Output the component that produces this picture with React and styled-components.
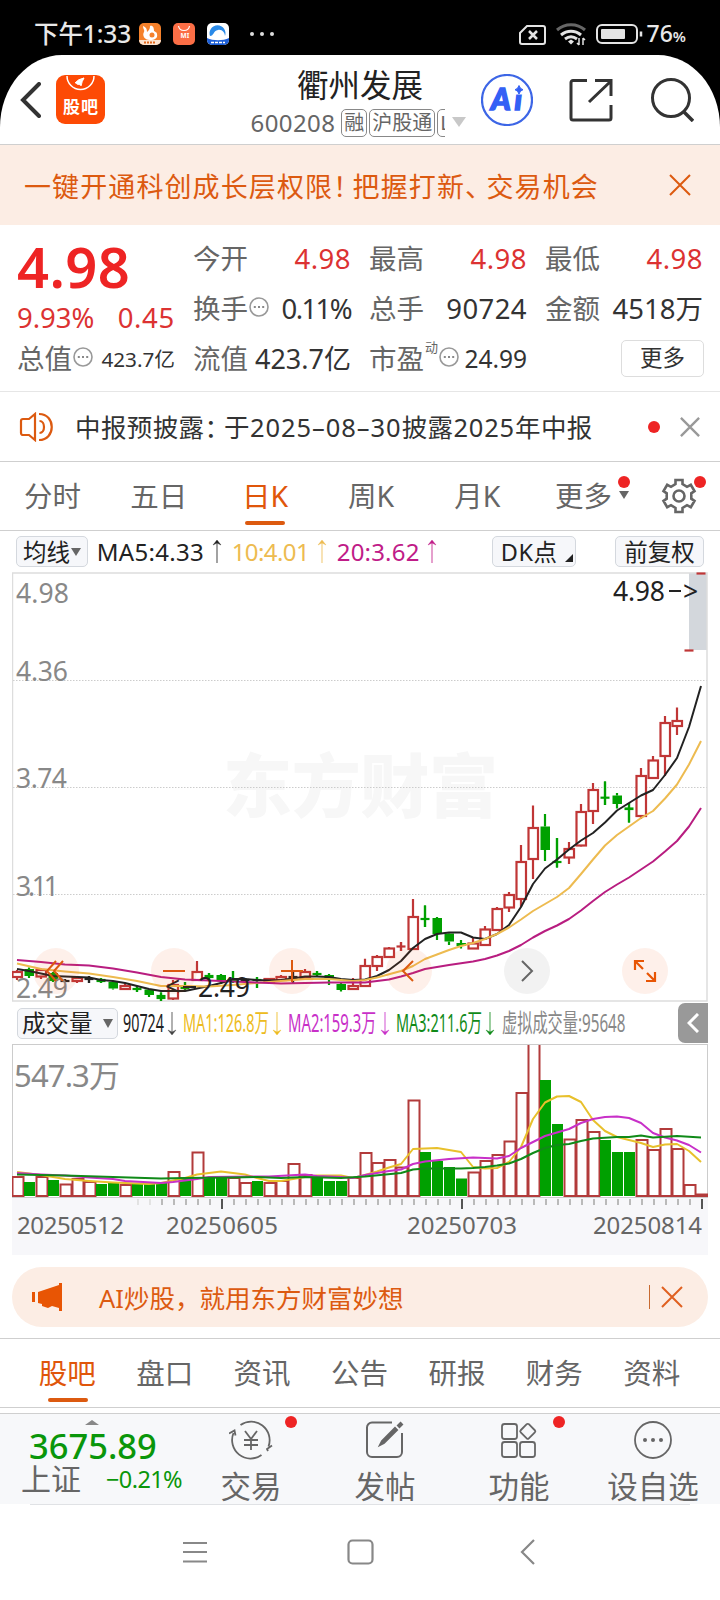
import React from 'react';
import styled, { createGlobalStyle } from 'styled-components'

const GlobalStyle = createGlobalStyle`
  * { box-sizing: border-box; }
  body {
    margin: 0;
    background: #000;
    font-family: 'Noto Sans', 'Noto Sans CJK SC', sans-serif;
    color: #222;
  }
  svg { display: block; flex: none; }
`

const Phone = styled.div`
  width: 720px;
  height: 1600px;
  overflow: hidden;
  background: #000;
`

const StatusBar = styled.div`
  height: 55px;
  padding: 12px 34px 0 34px;
  display: flex;
  align-items: center;
  justify-content: space-between;
  color: #e8e8e8;
`

const StatusGroup = styled.div`
  display: flex;
  align-items: center;
  gap: ${p => p.$gap}px;
`

const Clock = styled.span`
  font-size: 24.5px;
  line-height: 30px;
  font-weight: 500;
  letter-spacing: -0.1px;
  margin-right: -4px;
`

const Percent = styled.span`
  font-size: 23px;
  font-weight: 500;
  line-height: 30px;
  padding-top: 2px;
  small { font-size: 15px; font-weight: 600; }
`

const Screen = styled.div`
  height: 1545px;
  background: #fff;
  border-radius: 62px 62px 0 0 / 72px 72px 0 0;
  overflow: hidden;
`

const Header = styled.div`
  height: 90px;
  display: grid;
  grid-template-columns: 245px 230px 245px;
  border-bottom: 1px solid #cfcfcf;
`

const HeaderLeft = styled.div`
  display: flex;
  align-items: center;
  gap: 15px;
  padding-left: 20px;
`

const HeaderTools = styled.div`
  display: flex;
  align-items: center;
  padding-left: 6px;
`

const TitleBlock = styled.div`
  display: flex;
  flex-direction: column;
  align-items: center;
`

const Title = styled.div`
  font-size: 31.5px;
  line-height: 40px;
  margin-top: 10px;
  color: #222;
`

const CodeRow = styled.div`
  display: flex;
  align-items: center;
  width: 219px;
  height: 28px;
  margin-top: 3px;
  color: #666;
  font-size: 24px;
  letter-spacing: 0.4px;
`

const TagStrip = styled.div`
  display: flex;
  gap: 2px;
  width: 104px;
  margin: 2px 7px 0 6px;
  overflow: hidden;
`

const Tag = styled.span`
  flex: none;
  height: 28px;
  line-height: 25px;
  padding: 0 2px;
  border: 1.5px solid #888;
  border-radius: 5px;
  font-size: 20px;
  letter-spacing: 0;
`

const Notice = styled.div`
  height: 80px;
  display: flex;
  align-items: center;
  justify-content: space-between;
  padding: 0 29px 0 24px;
  background: #fcede4;
  color: #dc5a10;
  font-size: 27px;
  letter-spacing: 1.1px;
`

const Spaced = styled.span`
  letter-spacing: ${p => p.$by}px;
`

const Quote = styled.div`
  height: 167px;
  display: grid;
  grid-template-columns: repeat(4, 158px);
  column-gap: 18px;
  padding: 9px 0 0 17px;
  border-bottom: 1px solid #e6e6e6;
`

const Column = styled.div`
  display: flex;
  flex-direction: column;
`

const Price = styled.div`
  height: 68px;
  line-height: 64px;
  font-size: 56px;
  font-weight: 600;
  letter-spacing: 0.4px;
  color: #ee2424;
`

const Change = styled.div`
  height: 32px;
  line-height: 31px;
  display: flex;
  justify-content: space-between;
  font-size: 27.5px;
  color: #dc3232;
`

const Cell = styled.div`
  height: 50px;
  display: flex;
  align-items: center;
`

const Label = styled.span`
  font-size: 27.5px;
  line-height: 34px;
  color: #666;
`

const Value = styled.span`
  margin-left: auto;
  font-size: ${p => p.$size || 27.5}px;
  line-height: 34px;
  letter-spacing: ${p => p.$track || 0}px;
  white-space: nowrap;
  color: ${p => (p.$up ? '#dc3232' : '#333')};
`

const Super = styled.span`
  font-size: 13px;
  line-height: 14px;
  margin-bottom: 24px;
  margin-left: 1px;
  color: #666;
`

const MoreButton = styled.div`
  width: 83px;
  height: 37px;
  margin: -1px -1px 0 auto;
  line-height: 33px;
  text-align: center;
  border: 1.5px solid #ddd;
  border-radius: 5px;
  font-size: 22.5px;
  color: #333;
`

const News = styled.div`
  height: 70px;
  display: flex;
  align-items: center;
  padding: 0 20px 0 19px;
  border-bottom: 1px solid #cfcfcf;
`

const NewsText = styled.div`
  flex: 1;
  margin-left: 21px;
  padding-bottom: 2px;
  font-size: 25.5px;
  letter-spacing: 0.4px;
  color: #333;
  white-space: nowrap;
`

const Dot = styled.i`
  display: block;
  width: 12px;
  height: 12px;
  border-radius: 50%;
  background: #ee2424;
`

const CornerDot = styled(Dot)`
  position: absolute;
  left: ${p => p.$x}px;
  top: ${p => p.$y}px;
`

const Tabs = styled.div`
  display: flex;
  height: ${p => p.$height}px;
  padding: ${p => p.$pad};
  border-top: ${p => (p.$topLine ? '1px solid #cfcfcf' : 'none')};
  border-bottom: 1px solid #cfcfcf;
`

const Tab = styled.div`
  position: relative;
  width: ${p => p.$width}px;
  display: flex;
  align-items: center;
  justify-content: center;
  padding: 0 1px 3px 0;
  font-size: 28.5px;
  color: ${p => (p.$active ? '#e0560a' : '#666')};
  &::after {
    content: '';
    display: ${p => (p.$active ? 'block' : 'none')};
    position: absolute;
    bottom: 5px;
    left: calc(50% - 20px);
    width: 40px;
    height: 4px;
    border-radius: 2px;
    background: #dc5a10;
  }
`

const MoreTab = styled(Tab)`
  justify-content: flex-start;
  padding-left: 24px;
`

const GearTab = styled(Tab)`
  padding: 0 0 0 3px;
`

const Triangle = styled.i`
  display: block;
  border: solid transparent;
  border-width: ${p => p.$h}px ${p => p.$w / 2}px 0;
  border-top-color: ${p => p.$color || '#666'};
`

const Indicators = styled.div`
  display: flex;
  align-items: center;
  height: 41px;
  padding: 0 16px;
  font-size: 24px;
`

const Chip = styled.div`
  display: flex;
  align-items: center;
  justify-content: space-between;
  width: ${p => p.$width}px;
  height: 31px;
  padding: 0 ${p => p.$pad}px;
  border: 1px solid #d4d8de;
  border-radius: 5px;
  background: #f6f7fa;
  font-size: 23.5px;
  line-height: 28px;
  white-space: nowrap;
`

const Average = styled.span`
  width: ${p => p.$width}px;
  margin-left: ${p => p.$left}px;
  letter-spacing: ${p => p.$track || 0}px;
  color: ${p => p.$color};
  white-space: nowrap;
`

const Spacer = styled.div`
  width: ${p => p.$width}px;
  flex: none;
`

const ChartBox = styled.div`
  position: relative;
  width: 696px;
  margin-left: 12px;
`

const Controls = styled.div`
  position: absolute;
  left: 21px;
  top: 376px;
  display: flex;
  gap: 71.8px;
`

const RoundButton = styled.div`
  width: 46px;
  height: 46px;
  border-radius: 50%;
  display: flex;
  align-items: center;
  justify-content: center;
  background: ${p => (p.$gray ? 'rgba(150,150,150,0.12)' : 'rgba(240,90,20,0.09)')};
`

const VolumeBar = styled.div`
  display: flex;
  align-items: center;
  height: 42px;
  padding: 0 12px 0 17px;
`

const Squeezed = styled.div`
  width: ${p => p.$width}px;
  margin-left: ${p => p.$left}px;
  font-size: 24.5px;
  line-height: 32px;
  color: ${p => p.$color};
  white-space: nowrap;
  span {
    display: inline-block;
    transform: scaleX(${p => p.$scale});
    transform-origin: left;
  }
`

const Expander = styled.div`
  width: 30px;
  height: 40px;
  margin-left: auto;
  border-radius: 7px 0 0 7px;
  background: #999;
  display: flex;
  align-items: center;
  justify-content: center;
`

const Promo = styled.div`
  height: 60px;
  margin: 12px 12px 11px;
  padding: 0 25px 0 20px;
  border-radius: 30px;
  background: #fcede4;
  display: flex;
  align-items: center;
  font-size: 25.5px;
  color: #dc5a10;
`

const PromoText = styled.div`
  flex: 1;
  margin-left: 37px;
  padding-bottom: 2px;
`

const Divider = styled.div`
  width: 1px;
  height: 24px;
  margin-right: 11px;
  background: #c86a30;
`

const BottomBar = styled.div`
  display: flex;
  height: 91px;
  margin-top: 5px;
  border-top: 1px solid #cfcfcf;
  background: #f7f8fa;
`

const IndexBlock = styled.div`
  width: 184px;
  padding: 6px 0 0 21px;
`

const IndexArrow = styled.i`
  display: block;
  width: 0;
  margin-left: 64px;
  border: solid transparent;
  border-width: 0 7px 5px;
  border-bottom-color: #888;
`

const IndexValue = styled.div`
  padding-left: 8px;
  font-size: 34.5px;
  font-weight: 500;
  line-height: 41px;
  color: #0a960a;
`

const IndexRow = styled.div`
  display: flex;
  align-items: center;
  justify-content: space-between;
  width: 161px;
  height: 26px;
  line-height: 30px;
  font-size: 30px;
  color: #666;
  em {
    font-style: normal;
    font-size: 23.5px;
    color: #0a960a;
    letter-spacing: -0.6px;
  }
`

const Action = styled.div`
  position: relative;
  width: 134px;
  display: flex;
  flex-direction: column;
  align-items: center;
  padding-top: 6px;
  font-size: 30.5px;
  line-height: 42px;
  color: #666;
  svg { margin-bottom: 5px; }
`

const NavBar = styled.div`
  height: 96px;
  margin: 0 30px;
  border-top: 1px solid #e0e2e5;
  display: flex;
  justify-content: center;
  align-items: center;
  gap: 140px;
  padding: 0 0 2px 3px;
`

const RED = '#c03636'
const GREEN = '#00a000'
const BLACK = '#222'

// [colour, high, body top, body bottom, low], one entry per trading day
const candles = [
  ['r', 970, 972, 977, 980], ['g', 967.5, 969, 976, 978], ['r', 968.5, 970, 976.5, 979],
  ['g', 972, 973, 981, 982], ['k', 979, 981, 981, 982], ['r', 977, 978, 981, 983],
  ['k', 976, 979, 979, 983], ['g', 978, 980, 981, 983], ['g', 981, 982, 988.5, 989.5],
  ['r', 983.5, 986, 989, 990], ['g', 986, 989, 989, 992], ['g', 989, 989.5, 995, 997],
  ['g', 992.5, 996, 998, 1001], ['r', 980, 985, 998.5, 1000], ['g', 982, 987, 988, 991],
  ['r', 961, 972, 980, 981], ['g', 973, 976, 977, 979], ['g', 974, 975, 980, 984],
  ['g', 971, 980, 980, 983], ['k', 978, 980, 980, 982], ['g', 977, 980, 980, 988],
  ['r', 978, 979, 982, 983], ['r', 975, 977, 980, 981], ['k', 972, 977, 977, 983],
  ['r', 969, 972, 978, 979], ['g', 971, 974, 974, 977], ['g', 974, 975, 979, 985],
  ['g', 983, 984, 990, 991.5], ['r', 978, 986, 989, 989], ['r', 958.7, 966, 986, 987],
  ['r', 955, 957, 966, 971], ['r', 947, 948.5, 957, 958], ['r', 942, 946.5, 946.5, 951],
  ['r', 899, 917, 949, 950], ['g', 905.5, 919, 919, 927], ['g', 917, 918, 934, 940],
  ['g', 933, 933.5, 941.5, 945], ['g', 940, 943, 946, 948.5], ['r', 938, 943.5, 948.5, 949],
  ['r', 926, 929.5, 945, 946], ['r', 907, 909, 930, 930], ['r', 892, 895, 907.5, 912],
  ['r', 845, 862, 899, 907], ['r', 805.5, 828, 859, 879], ['g', 814, 826.5, 850, 861],
  ['g', 838, 862, 862, 867.5], ['r', 842, 849, 857.5, 864], ['r', 804, 812, 845.5, 846.5],
  ['r', 783, 790, 811, 824], ['g', 781.5, 797.7, 797.7, 805], ['g', 793, 795.5, 804, 808.5],
  ['g', 803, 808.5, 809, 822.5], ['r', 768, 776, 816, 819], ['r', 756, 760.5, 778, 779],
  ['r', 716, 723, 756, 776], ['r', 707.5, 721, 726, 735],
  ['r', 650.5, 650.5, 650.5, 650.5], ['r', 573.5, 573.5, 573.5, 573.5],
]

const volumes = [
  1177, 1182, 1177, 1180, 1184.5, 1179, 1182, 1184, 1182.5, 1185, 1184, 1184, 1183, 1172, 1177,
  1152.5, 1177, 1177.5, 1178, 1183, 1181, 1183, 1181, 1164, 1175, 1177, 1181, 1181, 1178, 1153,
  1163, 1160, 1167.5, 1100.5, 1152, 1161, 1167, 1178.5, 1172.5, 1161, 1155, 1141.5, 1093, 1030,
  1080, 1124, 1139.5, 1120, 1132, 1140, 1152, 1152, 1140, 1150, 1129, 1149, 1185, 1194.5,
]
const fallingDays = [1, 3, 7, 8, 10, 11, 12, 14, 16, 17, 20, 25, 26, 27, 34, 35, 36, 37, 44, 45, 49, 50, 51]

const ma5 = '17,969 29,971 41,973.5 53,976 65,976.5 77,977 89,977.5 101,980 113,981 125,983 137,986 149,989 161,991 185,991 197,988.5 209,986 221,983 233,979 245,979 257,980 269,980.5 281,980 293,978.5 305,976.5 317,976.5 329,977 341,979 353,980 365,979.5 377,976 389,970 401,961 413,948 425,939 437,934 449,932.5 461,932.5 473,937.5 485,939 497,934 509,925 521,907 533,884 545,868.5 557,859.5 569,849.5 581,840.5 593,833 605,822.5 617,810.5 629,803 641,795.5 653,790 665,775 677,758 689,727 701,686'
const ma10 = '17,963.5 41,969 65,971.5 89,973.5 113,977 137,981 161,986 185,986 209,986.5 233,985 257,983 281,981 305,979 329,979 353,981 365,980 377,977.5 401,971 413,966 425,959 437,954.5 449,950 461,946 473,943 485,939 497,934 509,927.5 521,919.5 533,911 545,904 557,897 569,888 581,874 593,859.5 605,845.5 617,835 629,826.5 641,818 653,811 665,798.5 677,784.5 689,764.5 701,741'
const ma20 = '17,960 41,962 65,964.5 89,965.5 113,968.5 137,972.5 161,977 185,979.5 209,980.5 233,981.5 257,982.5 281,983.5 305,983 329,982.5 365,982.5 389,979.5 401,976.5 413,973 425,969 449,965 473,961.5 485,959 497,955.5 509,951 521,945 533,937.5 545,931 557,925.5 569,919 581,910.5 593,901 605,892 617,884.5 629,877.5 641,869.5 653,861.5 665,851.5 677,841 689,826.5 701,808'
const vol1 = '17,1172 41,1175 65,1179 89,1181 113,1182.5 149,1184 161,1183 185,1178 197,1174.5 209,1173 221,1171.5 233,1173 245,1174.5 257,1178 269,1181 281,1181 305,1177 317,1175.5 341,1175.5 353,1178 365,1175 377,1171.5 389,1167.5 401,1164 413,1149 437,1148 449,1150 461,1152 473,1167 485,1168.5 497,1168 509,1162 521,1147 533,1119 545,1102.5 557,1096.5 569,1096 581,1102 593,1120 605,1131 617,1137 629,1140 641,1143 653,1147 665,1144.5 677,1144 689,1151 701,1162'
const vol2 = '17,1173 41,1174.5 65,1175.5 89,1177.5 113,1179 125,1181 161,1183 173,1182 197,1179 209,1177 269,1176.5 305,1174.5 317,1176 341,1177 353,1178 365,1175 389,1171 401,1169.5 413,1164 425,1161.5 449,1159 473,1157.5 497,1158.5 509,1156 521,1148 533,1142 545,1136 569,1129 581,1123 593,1119 605,1117 617,1116.5 629,1118 641,1123 653,1133 665,1137.5 677,1140.5 689,1145 701,1152.5'
const vol3 = '17,1174.5 65,1175.5 113,1177 161,1178.5 185,1178 233,1177.5 257,1177 281,1178 305,1177 341,1178 365,1176.5 401,1173 413,1169.5 425,1168.5 461,1168.5 473,1168 485,1167 497,1165.5 509,1163.5 521,1159 533,1153 545,1148 557,1145 569,1144 581,1141 593,1138.5 617,1137 629,1137 641,1135.5 653,1137.5 677,1136 701,1137.5'

const dayX = i => 17 + i * 12

const Candle = ({ x, data }) => {
  const [kind, high, top, bottom, low] = data
  const color = kind === 'r' ? RED : kind === 'g' ? GREEN : BLACK
  const flat = bottom - top < 3
  return (
    <g stroke={color} strokeWidth="2.2">
      <path d={`M${x} ${high}V${top}M${x} ${bottom}V${low}`} />
      {flat
        ? <path d={`M${x - 4.5} ${(top + bottom) / 2}h9`} strokeWidth={2.2 + bottom - top} />
        : <rect x={x - 4.5} y={top} width="9.5" height={bottom - top} fill={kind === 'r' ? '#fff' : color} strokeWidth={kind === 'r' ? 2.2 : 0} />}
      {flat && <path d={`M${x} ${high}V${low}`} />}
    </g>
  )
}

const Line = ({ points, color }) => (
  <polyline points={points} fill="none" stroke={color} strokeWidth="2" strokeLinejoin="round" />
)

const PriceChart = () => (
  <svg width="696" height="430" viewBox="12 572 696 430">
    <text x="223" y="812" textLength="275" fontSize="69" fontWeight="900" fill="#f7f7f7">东方财富</text>
    {[680.5, 787.5, 894.5].map(y => (
      <path key={y} d={`M13 ${y}H707`} stroke="#ccc" strokeDasharray="1.5 1.5" />
    ))}
    <rect x="689" y="573" width="18" height="77" fill="#d3d7dc" />
    <rect x="12.5" y="573" width="694.5" height="428" fill="none" stroke="#ddd" strokeWidth="1.5" />
    {candles.map((c, i) => <Candle key={i} x={dayX(i)} data={c} />)}
    <Line points={ma5} color="#222" />
    <Line points={ma10} color="#edbb50" />
    <Line points={ma20} color="#b81d80" />
    <g fontSize="26.5" fill="#888">
      <text x="16" y="603" textLength="53">4.98</text>
      <text x="16" y="680.5" textLength="52">4.36</text>
      <text x="16" y="788" textLength="51">3.74</text>
      <text x="16" y="895.5" textLength="43">3.11</text>
      <text x="16" y="998" textLength="52">2.49</text>
    </g>
    <g fontSize="26.5" fill="#222">
      <text x="613" y="601" textLength="52">4.98</text>
      <text x="683" y="601">&gt;</text>
      <path d="M669 591h12M183 987h13" stroke="#222" strokeWidth="2.2" />
      <text x="165" y="996">&lt;</text>
      <text x="198" y="997" textLength="52">2.49</text>
    </g>
  </svg>
)

const VolumeChart = () => (
  <svg width="696" height="211" viewBox="12 1044 696 211">
    <defs><clipPath id="frame"><rect x="12" y="1045" width="696" height="152" /></clipPath></defs>
    <rect x="12" y="1198" width="696" height="57" fill="#f7f7fa" />
    <rect x="12.5" y="1044.5" width="695" height="153" fill="#fff" stroke="#ccc" />
    <g clipPath="url(#frame)">
      {volumes.map((top, i) => {
        const x = dayX(i)
        return fallingDays.includes(i)
          ? <rect key={i} x={x - 5} y={top} width="11" height={1196 - top} fill={GREEN} />
          : <rect key={i} x={x - 4.5} y={top} width="11" height={1196 - top} fill="#fff" stroke="#b23b3b" strokeWidth="2" />
      })}
    </g>
    <Line points={vol1} color="#e8c02c" />
    <Line points={vol2} color="#c830c8" />
    <Line points={vol3} color="#108a18" />
    {Array.from({ length: 48 }, (_, k) => {
      const major = k % 20 === 7
      return (
        <path
          key={k}
          d={`M${Math.min(138 + k * 12, 702)} 1199v${major ? 10 : 6}`}
          stroke={major ? '#555' : k < 2 ? '#ddd' : '#aaa'}
          strokeWidth={major ? 2 : 1.6}
        />
      )
    })}
    <text x="14" y="1087" fontSize="31" textLength="106" fill="#888">547.3万</text>
    <g fontSize="24" fill="#666">
      <text x="17" y="1234" textLength="107">20250512</text>
      <text x="166" y="1234" textLength="112">20250605</text>
      <text x="407" y="1234" textLength="110">20250703</text>
      <text x="593" y="1234" textLength="109">20250814</text>
    </g>
  </svg>
)

const Cross = ({ size, color, weight = 2 }) => (
  <svg width={size} height={size} viewBox="0 0 22 22" stroke={color} strokeWidth={weight}>
    <path d="M1 1l20 20M21 1L1 21" />
  </svg>
)

const Arrow = ({ color, down }) => (
  <svg width="10" height="25" viewBox="0 0 10 25">
    <g transform={down ? 'rotate(180 5 12.5)' : undefined}>
      <path d="M5 2v22" stroke={color} strokeWidth="1.2" strokeOpacity="0.7" />
      <path d="M1 6l4-5 4 5-4-2z" fill={color} stroke={color} strokeWidth="0.4" />
    </g>
  </svg>
)

const InfoIcon = styled.svg`
  width: 20px;
  height: 20px;
  margin: -4px 0 0 ${p => p.$left}px;
`

const Info = ({ left = 1 }) => (
  <InfoIcon $left={left} viewBox="0 0 20 20">
    <circle cx="10" cy="10" r="9" fill="none" stroke="#999" strokeWidth="1.6" />
    <path d="M4.8 10h2M9 10h2M13.2 10h2" stroke="#888" strokeWidth="2" />
  </InfoIcon>
)

const Stat = ({ label, value, info, sup, up, size, track }) => (
  <Cell>
    <Label>{label}</Label>
    {sup && <Super>{sup}</Super>}
    {info && <Info />}
    <Value $up={up} $size={size} $track={track}>{value}</Value>
  </Cell>
)

const StatusIcons = () => (
  <svg width="138" height="24" viewBox="0 0 138 24">
    <rect x="1" y="1" width="22" height="22" rx="5" fill="#f5812b" />
    <path d="M5 4c0 3 2 4 1 6-2 3 0 8 6 8 5 0 8-2 7-6 0-2-2-2-3-3 0-3-1-6-4-5 0 3-1 4-3 6 0-3-1-5-4-6z" fill="#fff" />
    <circle cx="14" cy="13" r="2.5" fill="#f5812b" />
    <path d="M1 18h22a5 5 0 0 1-5 5H6a5 5 0 0 1-5-5z" fill="#fbe3d0" />
    <path d="M6 20.5h12" stroke="#e0661a" strokeWidth="2" strokeDasharray="2 1" />
    <rect x="35" y="1" width="22" height="22" rx="5" fill="#fb6e46" />
    <path d="M40.500 4c1 6 10 6 11 0" fill="none" stroke="#fff" strokeWidth="1.2" />
    <text x="42.500" y="16" fontSize="6.500" fontWeight="700" fill="#fff">MI</text>
    <rect x="69" y="1" width="22" height="22" rx="5" fill="#fff" />
    <path d="M72 14a8 8 0 1 1 15 0c0-3-3-7-7-6-5 1-4 6-8 6z" fill="#2a8ae8" />
    <path d="M69 16c6 3 16 3 22 0v2a5 5 0 0 1-5 5H74a5 5 0 0 1-5-5z" fill="#1c5fd8" />
    <path d="M73 20.500h14" stroke="#fff" strokeWidth="1.500" strokeDasharray="3 1" />
    <g fill="#ddd"><circle cx="114" cy="12" r="2" /><circle cx="124" cy="12" r="2" /><circle cx="134" cy="12" r="2" /></g>
  </svg>
)

const DeviceIcons = () => (
  <svg width="124" height="24" viewBox="0 0 124 24" fill="none" stroke="#e4e4e4" strokeWidth="2">
    <path d="M8 4h16a2 2 0 0 1 2 2v14a2 2 0 0 1-2 2H3a2 2 0 0 1-2-2V11z" />
    <path d="M10 9l8 8M18 9l-8 8" strokeWidth="2.500" />
    <path d="M38 8c8-7 20-7 28 0" strokeWidth="3" stroke="#666" />
    <path d="M42 13c6-5 14-5 20 0M46 17c4-3 8-3 12 0" strokeWidth="3" />
    <path d="M49 19.500l3 3 3-3-3-2z" fill="#e4e4e4" stroke="none" />
    <path d="M60 16v7M64 16v7M58 21l2 2M66 18l-2-2" strokeWidth="1.500" />
    <rect x="78" y="3" width="40" height="18" rx="5" />
    <rect x="82" y="7" width="24" height="10" rx="1" fill="#e4e4e4" stroke="none" />
    <path d="M122 9.500v5" strokeWidth="2.500" />
  </svg>
)

const Logo = () => (
  <svg width="49" height="49" viewBox="0 0 49 49">
    <rect width="49" height="49" rx="9" fill="#fd4a05" />
    <path d="M11 1a13.500 13.500 0 0 0 27 0" fill="none" stroke="#fff" strokeWidth="1.500" />
    <path d="M19 8q3-4 9-5-4 2-6 7M22 9q3-4 6-6-2 3-3 8" fill="#fff" stroke="#fff" />
    <text x="7" y="38" textLength="35" fontSize="17" fontWeight="700" fill="#fff">股吧</text>
  </svg>
)

const AiBadge = () => (
  <svg width="52" height="52" viewBox="0 0 52 52">
    <circle cx="26" cy="26" r="25" fill="#fff" stroke="#3d66e6" strokeWidth="2.200" />
    <text x="10" y="36" fontSize="30" fontFamily="Lato" fontWeight="900" fontStyle="italic" fill="#3360f5" stroke="#3360f5" strokeWidth="1.500" textLength="31">Ai</text>
    <rect x="32" y="10" width="12" height="10.500" fill="#fff" />
    <path d="M38 11.500q1 3.500 4 4.200-3 .8-4 4.300-1-3.500-4-4.300 3-.7 4-4.200z" fill="#3360f5" stroke="#3360f5" />
  </svg>
)

const DkCorner = styled.svg`
  width: 8px;
  height: 8px;
  margin: 12px -6px 0 0;
`

const App = () => {
  const periods = ['分时', '五日', '日K', '周K', '月K']
  const sections = ['股吧', '盘口', '资讯', '公告', '研报', '财务', '资料']
  return (
    <Phone>
      <GlobalStyle />
      <StatusBar>
        <StatusGroup $gap={11}>
          <Clock>下午1:33</Clock>
          <StatusIcons />
        </StatusGroup>
        <StatusGroup $gap={4}>
          <DeviceIcons />
          <Percent>76<small>%</small></Percent>
        </StatusGroup>
      </StatusBar>

      <Screen>
        <Header>
          <HeaderLeft>
            <svg width="21" height="36" viewBox="0 0 21 36" fill="none" stroke="#333" strokeWidth="4">
              <path d="M19 2L3 18l16 16" strokeLinecap="round" />
            </svg>
            <Logo />
          </HeaderLeft>
          <TitleBlock>
            <Title>衢州发展</Title>
            <CodeRow>
              600208
              <TagStrip><Tag>融</Tag><Tag>沪股通</Tag><Tag>L1</Tag></TagStrip>
              <Triangle $w={14} $h={10} $color="#c8c8c8" />
            </CodeRow>
          </TitleBlock>
          <HeaderTools>
            <AiBadge />
            <Spacer $width={36} />
            <svg width="44" height="44" viewBox="0 0 44 44" fill="none" stroke="#333" strokeWidth="3">
              <path d="M18 2.500H4a2 2 0 0 0-2 2V40a2 2 0 0 0 2 2h36a2 2 0 0 0 2-2V27M26 2.500h16V18M42 3L20 24" />
            </svg>
            <Spacer $width={37} />
            <svg width="44" height="44" viewBox="0 0 44 44" fill="none" stroke="#333" strokeWidth="3">
              <circle cx="21" cy="20" r="18.500" />
              <path d="M33 33l10 10" strokeWidth="3.500" />
            </svg>
          </HeaderTools>
        </Header>

        <Notice>
          <span>一键开通科创成长层权限<Spaced $by={-7.5}>！</Spaced>把握打新<Spaced $by={-5.5}>、</Spaced>交易机会</span>
          <Cross size={22} color="#dc5a10" />
        </Notice>

        <Quote>
          <Column>
            <Price>4.98</Price>
            <Change><span>9.93%</span><Spaced $by={0.7}>0.45</Spaced></Change>
            <Stat label="总值" value="423.7亿" info size={20.7} />
          </Column>
          <Column>
            <Stat label="今开" value="4.98" up track={0.5} />
            <Stat label="换手" value="0.11%" info track={-1.6} />
            <Stat label="流值" value="423.7亿" size={27} />
          </Column>
          <Column>
            <Stat label="最高" value="4.98" up track={0.5} />
            <Stat label="总手" value="90724" track={0.4} />
            <Stat label="市盈" sup="动" value="24.99" info size={24.5} />
          </Column>
          <Column>
            <Stat label="最低" value="4.98" up track={0.5} />
            <Stat label="金额" value="4518万" />
            <Cell><MoreButton>更多</MoreButton></Cell>
          </Column>
        </Quote>

        <News>
          <svg width="35" height="30" viewBox="0 0 35 30" fill="none" stroke="#dc5a10" strokeWidth="2.2">
            <path d="M16 2v26l-6-5H4a2 2 0 0 1-2-2V9a2 2 0 0 1 2-2h6z" />
            <path d="M20.500 9c6 0 6 12 0 12M20 2c17 0 17 26 0 26" />
          </svg>
          <NewsText>
            中报预披露<Spaced $by={-6}>：</Spaced>于<Spaced $by={0.95}>2025–08–30</Spaced>披露<Spaced $by={0.8}>2025</Spaced>年中报
          </NewsText>
          <Dot />
          <Spacer $width={20} />
          <Cross size={20} color="#999" weight={2.6} />
        </News>

        <Tabs $height={69} $pad="0">
          {periods.map(name => <Tab key={name} $width={106.2} $active={name === '日K'}>{name}</Tab>)}
          <MoreTab $width={109}>
            更多
            <Spacer $width={7} />
            <Triangle $w={10} $h={8} />
            <CornerDot $x={87} $y={14} />
          </MoreTab>
          <GearTab $width={76}>
            <svg width="36" height="36" viewBox="0 0 36 36" fill="none" stroke="#666" strokeWidth="2.600">
              <circle cx="18" cy="18" r="5.500" />
              <path d="M14.500 2h7v4l4.500 2.800 3.800-2 3.700 6.400-3.200 2.100v5.400l3.200 2.100-3.700 6.400-3.800-2-4.500 2.800v4h-7v-4L10 27.200l-3.800 2-3.700-6.400 3.200-2.100v-5.400l-3.200-2.100 3.700-6.400 3.800 2L14.500 6z" />
            </svg>
            <CornerDot $x={54} $y={14} />
          </GearTab>
        </Tabs>

        <Indicators>
          <Chip $width={72} $pad={6}>均线<Triangle $w={10} $h={8} /></Chip>
          <Average $width={106} $left={9} $track={0.3} $color="#222">MA5:4.33</Average>
          <Spacer $width={9} /><Arrow color="#222" />
          <Average $width={77} $left={10} $track={-0.6} $color="#edbb50">10:4.01</Average>
          <Spacer $width={8} /><Arrow color="#edbb50" />
          <Average $width={82} $left={10} $track={0.2} $color="#c01c88">20:3.62</Average>
          <Spacer $width={8} /><Arrow color="#c01c88" />
          <Spacer $width={55} />
          <Chip $width={85} $pad={8}>
            <Spaced $by={0.6}>DK点</Spaced>
            <DkCorner viewBox="0 0 8 8"><path d="M8 0v8H0z" fill="#222" /></DkCorner>
          </Chip>
          <Spacer $width={39} />
          <Chip $width={89} $pad={8}>前复权</Chip>
        </Indicators>

        <ChartBox>
          <PriceChart />
          <Controls>
            <RoundButton>
              <svg width="22" height="24" viewBox="0 0 22 24" fill="none" stroke="#dc5a10" strokeWidth="2"><path d="M11 2L2 12l9 10M18 2l-9 10 9 10" /></svg>
            </RoundButton>
            <RoundButton>
              <svg width="22" height="22" viewBox="0 0 22 22" stroke="#dc5a10" strokeWidth="2"><path d="M0 11h22" /></svg>
            </RoundButton>
            <RoundButton>
              <svg width="22" height="22" viewBox="0 0 22 22" stroke="#dc5a10" strokeWidth="2"><path d="M0 11h22M11 0v22" /></svg>
            </RoundButton>
            <RoundButton>
              <svg width="16" height="22" viewBox="0 0 16 22" fill="none" stroke="#dc5a10" strokeWidth="2"><path d="M12 1L2 11l10 10" /></svg>
            </RoundButton>
            <RoundButton $gray>
              <svg width="14" height="22" viewBox="0 0 14 22" fill="none" stroke="#666" strokeWidth="2"><path d="M2 1l10 10L2 21" /></svg>
            </RoundButton>
            <RoundButton>
              <svg width="24" height="24" viewBox="0 0 24 24" fill="none" stroke="#e85504" strokeWidth="2.200"><path d="M2 11V2h9M2 2l8 8M13 22h9v-9M22 22l-8-8" /></svg>
            </RoundButton>
          </Controls>
        </ChartBox>

        <VolumeBar>
          <Chip $width={101} $pad={4}>成交量<Triangle $w={10} $h={9} /></Chip>
          <Squeezed $left={5} $width={41} $scale={0.585} $color="#222"><span>90724</span></Squeezed>
          <Spacer $width={3} /><Arrow color="#444" down />
          <Squeezed $left={6} $width={85} $scale={0.59} $color="#edbb20"><span>MA1:126.8万</span></Squeezed>
          <Spacer $width={4} /><Arrow color="#edbb20" down />
          <Squeezed $left={6} $width={88} $scale={0.605} $color="#c830c8"><span>MA2:159.3万</span></Squeezed>
          <Spacer $width={4} /><Arrow color="#c830c8" down />
          <Squeezed $left={6} $width={86} $scale={0.59} $color="#108a18"><span>MA3:211.6万</span></Squeezed>
          <Spacer $width={3} /><Arrow color="#108a18" down />
          <Squeezed $left={7} $width={124} $scale={0.62} $color="#888"><span>虚拟成交量:95648</span></Squeezed>
          <Expander>
            <svg width="12" height="20" viewBox="0 0 12 20" fill="none" stroke="#fff" strokeWidth="3"><path d="M11 1L2 10l9 9" /></svg>
          </Expander>
        </VolumeBar>

        <ChartBox><VolumeChart /></ChartBox>

        <Promo>
          <svg width="30" height="28" viewBox="0 0 30 28" fill="#e85504">
            <path d="M0 9h3v10H0zM6 9L27 2V0h3v28h-3v-3l-7-2-4 2-6-2v-2l-4-1z" />
          </svg>
          <PromoText>AI炒股<Spaced $by={-1}>，</Spaced>就用东方财富妙想</PromoText>
          <Divider />
          <Cross size={22} color="#e06020" />
        </Promo>

        <Tabs $height={70} $pad="0 19px" $topLine>
          {sections.map(name => <Tab key={name} $width={97.5} $active={name === '股吧'}>{name}</Tab>)}
        </Tabs>

        <BottomBar>
          <IndexBlock>
            <IndexArrow />
            <IndexValue>3675.89</IndexValue>
            <IndexRow>上证<em>−0.21%</em></IndexRow>
          </IndexBlock>
          <Action>
            <svg width="44" height="40" viewBox="0 0 44 40" fill="none" stroke="#666" strokeWidth="1.800">
              <path d="M11.500 5a18.500 18.500 0 0 1 28 21.500M39 31l-1-2 5-3.500M32.500 35A18.500 18.500 0 0 1 4.500 13M0 13.500l5.500-3 1 5" />
              <path d="M16 11l6 8 6-8M15 20h14M15 25h14M22 19v11" />
            </svg>
            交易
            <CornerDot $x={101} $y={2} />
          </Action>
          <Action>
            <svg width="40" height="40" viewBox="0 0 40 40" fill="none" stroke="#666" strokeWidth="2">
              <path d="M27 2.500H7a5 5 0 0 0-5 5V32a5 5 0 0 0 5 5h25a5 5 0 0 0 5-5V13" />
              <path d="M15 25l2-4L30 8l2 2-13 13z" fill="#666" />
              <path d="M33 7l4-4" strokeWidth="4" />
            </svg>
            发帖
          </Action>
          <Action>
            <svg width="40" height="40" viewBox="0 0 40 40" fill="none" stroke="#666" strokeWidth="1.800">
              <rect x="3" y="4" width="15" height="15" rx="2.500" />
              <rect x="3" y="22" width="15" height="15" rx="2.500" />
              <rect x="21" y="22" width="15" height="15" rx="2.500" />
              <rect x="23" y="5.500" width="11.500" height="11.500" rx="1.500" transform="rotate(45 28.700 11.300)" />
            </svg>
            功能
            <CornerDot $x={101} $y={2} />
          </Action>
          <Action>
            <svg width="40" height="40" viewBox="0 0 40 40" fill="none" stroke="#666" strokeWidth="1.800">
              <circle cx="20" cy="20" r="18" />
              <g fill="#666" stroke="none"><circle cx="12" cy="20" r="2" /><circle cx="20" cy="20" r="2" /><circle cx="28" cy="20" r="2" /></g>
            </svg>
            设自选
          </Action>
        </BottomBar>

        <NavBar>
          <svg width="24" height="26" viewBox="0 0 24 26" stroke="#888" strokeWidth="2.200"><path d="M0 4h24M0 13h24M0 22.500h24" /></svg>
          <svg width="27" height="26" viewBox="0 0 27 26" fill="none" stroke="#888" strokeWidth="2.200"><rect x="1.500" y="1.500" width="24" height="23" rx="4" /></svg>
          <svg width="27" height="26" viewBox="0 0 27 26" fill="none" stroke="#888" strokeWidth="2.200"><path d="M20 1L8 13l12 12" /></svg>
        </NavBar>
      </Screen>
    </Phone>
  );
};

export default App;
